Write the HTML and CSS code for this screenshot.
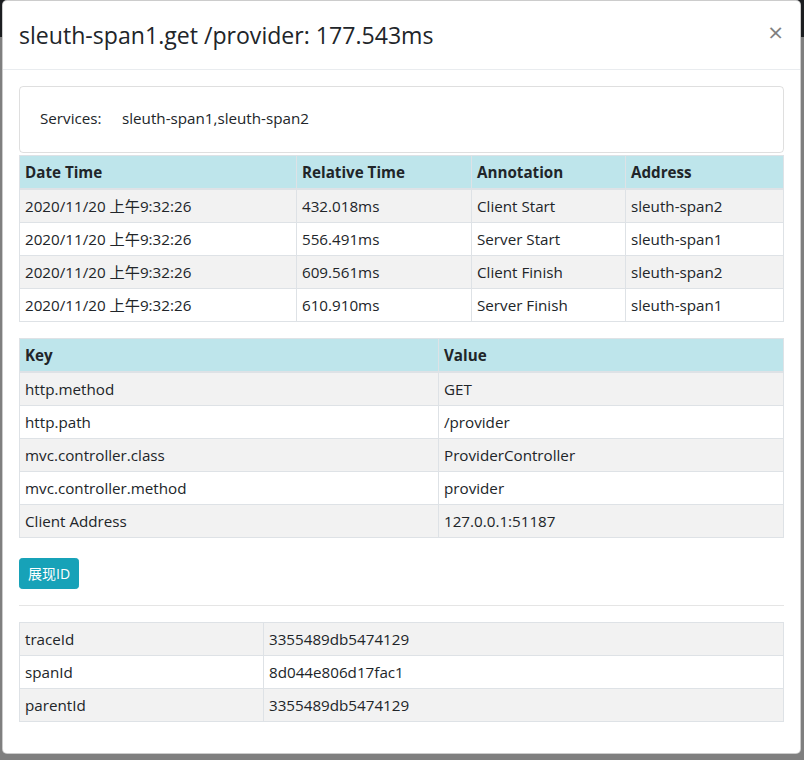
FILE: index.html
```html
<!DOCTYPE html>
<html lang="zh-CN">
<head>
<meta charset="utf-8">
<title>sleuth-span1.get /provider</title>
<link rel="stylesheet" href="styles.css">
</head>
<body>
<div class="topbar"></div>
<div class="modal">
  <div class="modal-header">
    <h4 class="modal-title">sleuth-span1.get /provider: 177.543ms</h4>
    <button class="close" type="button">&times;</button>
  </div>
  <div class="modal-body">
    <div class="card">
      <span class="svc-label">Services:</span>
      <span class="svc-value">sleuth-span1,sleuth-span2</span>
    </div>
    <table class="table">
      <colgroup>
        <col class="c-date"><col class="c-rel"><col class="c-ann"><col>
      </colgroup>
      <thead>
        <tr><th>Date Time</th><th>Relative Time</th><th>Annotation</th><th>Address</th></tr>
      </thead>
      <tbody>
        <tr><td>2020/11/20 上午9:32:26</td><td>432.018ms</td><td>Client Start</td><td>sleuth-span2</td></tr>
        <tr><td>2020/11/20 上午9:32:26</td><td>556.491ms</td><td>Server Start</td><td>sleuth-span1</td></tr>
        <tr><td>2020/11/20 上午9:32:26</td><td>609.561ms</td><td>Client Finish</td><td>sleuth-span2</td></tr>
        <tr><td>2020/11/20 上午9:32:26</td><td>610.910ms</td><td>Server Finish</td><td>sleuth-span1</td></tr>
      </tbody>
    </table>
    <table class="table">
      <colgroup><col class="c-key"><col></colgroup>
      <thead>
        <tr><th>Key</th><th>Value</th></tr>
      </thead>
      <tbody>
        <tr><td>http.method</td><td>GET</td></tr>
        <tr><td>http.path</td><td>/provider</td></tr>
        <tr><td>mvc.controller.class</td><td>ProviderController</td></tr>
        <tr><td>mvc.controller.method</td><td>provider</td></tr>
        <tr><td>Client Address</td><td>127.0.0.1:51187</td></tr>
      </tbody>
    </table>
    <div class="actions">
      <button class="btn" type="button">展现ID</button>
    </div>
    <hr class="divider">
    <table class="table">
      <colgroup><col class="c-id"><col></colgroup>
      <tbody>
        <tr><td>traceId</td><td>3355489db5474129</td></tr>
        <tr><td>spanId</td><td>8d044e806d17fac1</td></tr>
        <tr><td>parentId</td><td>3355489db5474129</td></tr>
      </tbody>
    </table>
  </div>
</div>
</body>
</html>
```
FILE: styles.css
```css
html, body {
  margin: 0;
  padding: 0;
}
body {
  background: #7f7f7f;
  font-family: "Open Sans", "Noto Sans CJK SC", sans-serif;
  font-size: 15.2px;
  line-height: 24px;
  color: #212529;
  min-height: 760px;
}
.topbar {
  height: 37px;
  background: #1b1d20;
}
.modal {
  position: absolute;
  top: 0;
  left: 2px;
  width: 799px;
  box-sizing: border-box;
  background: #fff;
  border: 1px solid rgba(0, 0, 0, 0.2);
  border-radius: 5px;
}
.modal-header {
  display: flex;
  align-items: flex-start;
  padding: 16px;
  border-bottom: 1px solid #e9ecef;
}
.modal-title {
  margin: 0;
  font-size: 23.1px;
  font-weight: 500;
  line-height: 36px;
}
.close {
  margin: -16px -16px -16px auto;
  padding: 19px 17px 13px;
  background: none;
  border: 0;
  font-family: "Open Sans", sans-serif;
  font-size: 26px;
  font-weight: 400;
  line-height: 24px;
  color: #000;
  opacity: 0.5;
}
.modal-body {
  padding: 16px 16px 15px;
}
.card {
  display: flex;
  padding: 19px 20px 22px;
  border: 1px solid rgba(0, 0, 0, 0.125);
  border-radius: 4px;
  margin-bottom: 2px;
}
.svc-label {
  width: 82px;
}
.table {
  width: 100%;
  border-collapse: collapse;
  table-layout: fixed;
  margin-bottom: 16px;
}
.table th,
.table td {
  border: 1px solid #dee2e6;
  padding: 4px 4px 4px 5px;
  text-align: left;
  vertical-align: top;
}
.table thead th {
  background: #bee5eb;
  font-weight: 700;
  border-bottom: 2px solid #dee2e6;
}
.table tbody tr:nth-of-type(odd) {
  background: #f2f2f2;
}
.c-date { width: 277px; }
.c-rel { width: 175px; }
.c-ann { width: 154px; }
.c-key { width: 419px; }
.c-id { width: 244px; }
.actions {
  padding-top: 4px;
}
.btn {
  display: inline-block;
  margin: 0;
  padding: 4px 8px;
  background: #17a2b8;
  border: 1px solid #17a2b8;
  border-radius: 3.2px;
  color: #fff;
  font-family: "Open Sans", "Noto Sans CJK SC", sans-serif;
  font-size: 14px;
  line-height: 21px;
  vertical-align: top;
}
.divider {
  margin: 16px 0;
  border: 0;
  border-top: 1px solid rgba(0, 0, 0, 0.1);
}
```
